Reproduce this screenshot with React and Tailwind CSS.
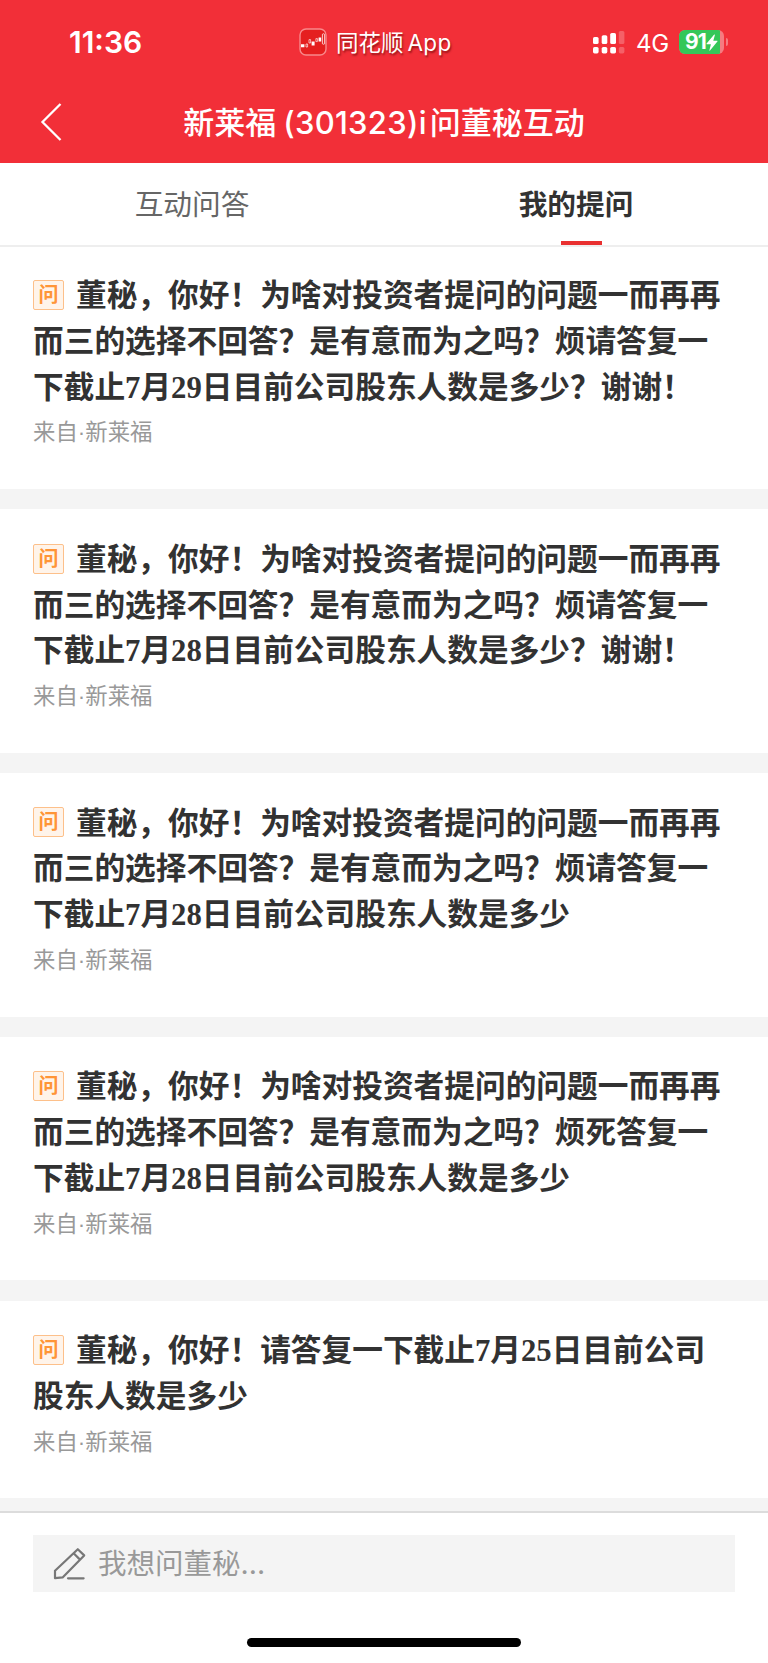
import React from 'react'

const questions = [
  {
    id: 1,
    lines: ['董秘，你好！为啥对投资者提问的问题一而再再', '而三的选择不回答？是有意而为之吗？烦请答复一', '下截止7月29日目前公司股东人数是多少？谢谢！'],
  },
  {
    id: 2,
    lines: ['董秘，你好！为啥对投资者提问的问题一而再再', '而三的选择不回答？是有意而为之吗？烦请答复一', '下截止7月28日目前公司股东人数是多少？谢谢！'],
  },
  {
    id: 3,
    lines: ['董秘，你好！为啥对投资者提问的问题一而再再', '而三的选择不回答？是有意而为之吗？烦请答复一', '下截止7月28日目前公司股东人数是多少'],
  },
  {
    id: 4,
    lines: ['董秘，你好！为啥对投资者提问的问题一而再再', '而三的选择不回答？是有意而为之吗？烦死答复一', '下截止7月28日目前公司股东人数是多少'],
  },
  {
    id: 5,
    lines: ['董秘，你好！请答复一下截止7月25日目前公司', '股东人数是多少'],
  },
]

const AppLogo = () => (
  <svg width="28" height="28" viewBox="0 0 28 28" fill="none">
    <rect x="1" y="1" width="26" height="26" rx="6" fill="#e51f1f" stroke="#f8898b" strokeWidth="1.4" />
    <path d="M2 16.2h3.4v3H2zM12.6 13.4h3v4.2h-3zM19.6 9.4h2.6v4.2h-2.6z" fill="#fff" />
    <path d="M7 16h1.6v3H7zM10 11.6h1.6v3.4H10zM16.9 10.6h1.5v3h-1.5z" stroke="#fff" strokeOpacity=".8" strokeWidth=".8" />
    <rect x="23.4" y="5.8" width="2.2" height="10.4" rx=".8" stroke="#fff" strokeOpacity=".85" strokeWidth=".9" />
  </svg>
)

// 듀얼심 신호 세기 (위: 막대, 아래: 점)
const Signal = () => (
  <svg width="32" height="24" viewBox="0 0 32 24" fill="#fff">
    <rect x="0" y="7" width="5.6" height="7" rx="1.6" />
    <rect x="8.7" y="5.2" width="5.6" height="8.8" rx="1.6" />
    <rect x="17.2" y="3" width="5.8" height="11" rx="1.6" />
    <rect x="25.8" y="1" width="5.6" height="13" rx="1.6" opacity=".24" />
    <rect x="0" y="17" width="5.6" height="6.4" rx="1.6" />
    <rect x="8.7" y="17" width="5.6" height="6.4" rx="1.6" />
    <rect x="17.2" y="17" width="5.8" height="6.4" rx="1.6" />
    <rect x="25.8" y="17" width="5.6" height="6.4" rx="1.6" opacity=".24" />
  </svg>
)

const Battery = () => (
  <div className="flex items-center gap-[2px]">
    <div className="w-[45px] h-6 rounded-[6px] overflow-hidden bg-[#f57b80] flex">
      <div className="w-[41px] h-6 bg-[#34c759] flex items-center justify-center pl-[4px]">
        <span className="text-white text-[21px] font-bold leading-6 tracking-[-0.8px]">91</span>
        <svg width="12" height="17" viewBox="0 0 12 17" fill="#fff">
          <path d="M8.2 0.6 0.6 9.4c-.3.4 0 .8.4.8h3.9L3.4 16.2c-.1.5.3.6.6.3L11.4 7.6c.3-.4.1-.8-.4-.8H7.3L8.9 1c.1-.5-.4-.8-.7-.4z" />
        </svg>
      </div>
    </div>
    <div className="w-[2px] h-2 rounded-r-full bg-[#f57b80]" />
  </div>
)

const StatusBar = () => (
  <div className="h-[84px] flex items-center pl-[69px] pr-10 text-white">
    <div className="w-[230px] text-[30px] font-semibold leading-none">11:36</div>
    <div className="flex items-center gap-[9px] flex-1">
      <AppLogo />
      <div className="pt-[2px] text-[22.5px] leading-none whitespace-nowrap [text-shadow:1px_2px_2px_rgb(90_0_0/0.6)]">
        同花顺<span className="ml-[4px] tracking-[0.3px]">App</span>
      </div>
    </div>
    <div className="flex items-center">
      <Signal />
      <span className="ml-[11px] mr-[10px] pt-[3px] text-[24px] leading-none tracking-[-0.2px]">4G</span>
      <Battery />
    </div>
  </div>
)

const TitleBar = () => (
  <div className="h-[79px] flex items-center px-10 text-white">
    <svg className="mb-[3px]" width="24" height="40" viewBox="0 0 24 40" fill="none" stroke="#fff" strokeWidth="2.3">
      <path d="M20.5 2 2.5 20l18 18" />
    </svg>
    <h1 className="flex-1 pr-6 pb-[2px] text-center text-[31px] font-medium leading-none whitespace-nowrap">
      新莱福<span className="ml-[7px] mr-[3px] tracking-[0.3px]">(301323)i</span>问董秘互动
    </h1>
  </div>
)

const Tabs = () => (
  <div className="h-[84px] grid grid-cols-2 border-b-2 border-[#eeeeee] text-[28.7px] text-center">
    <div className="leading-[83px] text-[#666666]">互动问答</div>
    <div className="flex flex-col items-center">
      <div className="h-[78px] leading-[83px] font-bold text-[#323232]">我的提问</div>
      <div className="w-[41px] h-1 ml-[10px] bg-[#e93030]" />
    </div>
  </div>
)

const Question = ({ lines }) => (
  <li className="bg-white px-[33px] pt-[26.4px] first:pt-[25px] pb-[42.6px] mb-[20.4px]">
    <div className="text-[30.7px] leading-[45.8px] font-bold text-[#323232] whitespace-nowrap font-['Liberation_Serif','Noto_Sans_CJK_SC',serif]">
      {lines.map((line, i) => (
        <div key={line} className="flex items-center h-[45.8px]">
          {i === 0 && (
            <span className="w-[31px] h-[30px] mr-3 rounded-[2px] border border-[#fdc08a] bg-[#fff4ea] text-[#ff9537] text-[20px] font-bold leading-[28px] text-center">问</span>
          )}
          <span className="pt-[4px]">{line}</span>
        </div>
      ))}
    </div>
    <div className="mt-[5px] h-8 text-[22.4px] leading-[38px] text-[#999999] font-['Liberation_Sans','Noto_Sans_CJK_SC',sans-serif]">来自·新莱福</div>
  </li>
)

const AskBar = () => (
  <footer className="h-[152px] shrink-0 border-t-2 border-[#dcdcdc] bg-white px-[33px] pt-[22px] flex flex-col items-center">
    <div className="w-full h-[57px] bg-[#f4f4f4] flex items-center pl-[20px]">
      <svg width="34" height="34" viewBox="0 0 34 34" fill="none" stroke="#777" strokeWidth="2.2" strokeLinejoin="round" strokeLinecap="round">
        <path d="M2 31.2V23.8L24.8 2.2l6.4 6.2L9.6 30.4z M20.6 6.2l6.4 6.4" />
        <path d="M15 31.3h15.6" />
      </svg>
      <span className="ml-[11px] pt-[2px] text-[28.5px] leading-none text-[#999999]">我想问董秘...</span>
    </div>
    <div className="mt-[46px] w-[274px] h-[9px] rounded-full bg-black" />
  </footer>
)

export default function App() {
  return (
    <div className="w-[768px] h-[1663px] flex flex-col overflow-hidden bg-white font-['Inter','Noto_Sans_CJK_SC',sans-serif]">
      <header className="bg-[#f22f38] shrink-0">
        <StatusBar />
        <TitleBar />
      </header>
      <Tabs />
      <ul className="flex-1 overflow-hidden bg-[#f4f4f4]">
        {questions.map((q) => (
          <Question key={q.id} lines={q.lines} />
        ))}
      </ul>
      <AskBar />
    </div>
  )
}
